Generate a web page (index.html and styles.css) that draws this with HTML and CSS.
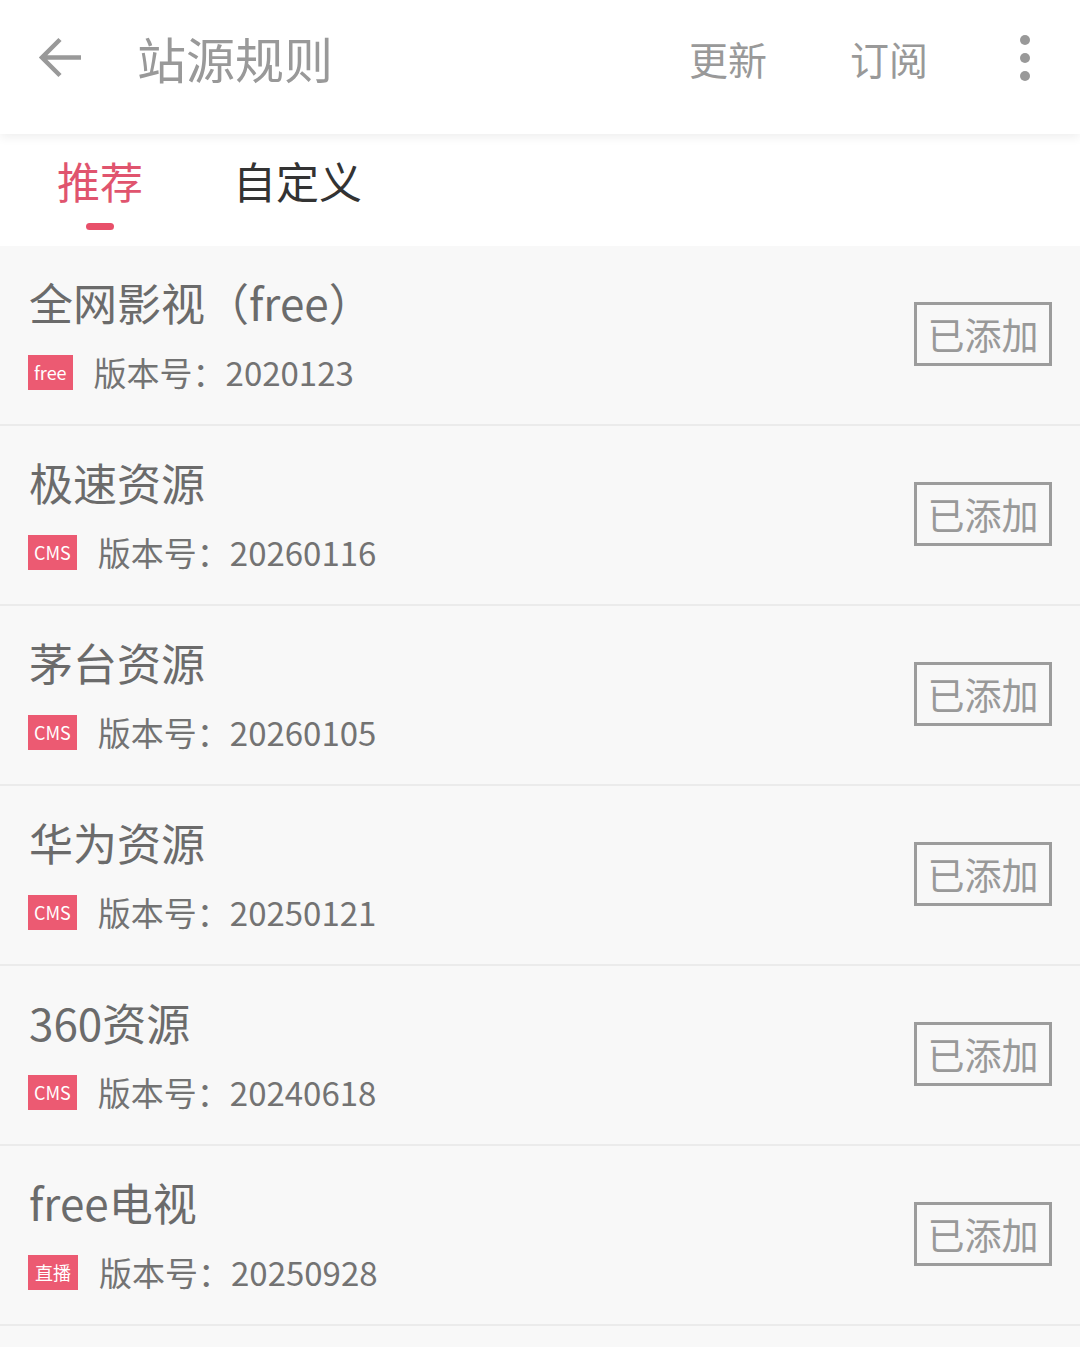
FILE: index.html
```html
<!DOCTYPE html>
<html lang="zh-CN">
<head>
<meta charset="utf-8">
<title>站源规则</title>
<link rel="stylesheet" href="styles.css">
</head>
<body>
<div class="topbar">
  <div class="back">
    <svg width="46" height="46" viewBox="0 0 46 46"><path d="M43 21.5H5M22 3.5L4 21.5L22 39.5" fill="none" stroke="#999" stroke-width="4.5"/></svg>
  </div>
  <div class="title">站源规则</div>
  <div class="action">更新</div>
  <div class="action">订阅</div>
  <div class="more"><i></i><i></i><i></i></div>
</div>

<div class="tabs">
  <div class="tab on">推荐</div>
  <div class="tab">自定义</div>
</div>

<ul class="list">
  <li>
    <div class="info">
      <div class="name">全网影视（free）</div>
      <div class="meta"><span class="tag">free</span>版本号：2020123</div>
    </div>
    <div class="btn">已添加</div>
  </li>
  <li>
    <div class="info">
      <div class="name">极速资源</div>
      <div class="meta"><span class="tag">CMS</span>版本号：20260116</div>
    </div>
    <div class="btn">已添加</div>
  </li>
  <li>
    <div class="info">
      <div class="name">茅台资源</div>
      <div class="meta"><span class="tag">CMS</span>版本号：20260105</div>
    </div>
    <div class="btn">已添加</div>
  </li>
  <li>
    <div class="info">
      <div class="name">华为资源</div>
      <div class="meta"><span class="tag">CMS</span>版本号：20250121</div>
    </div>
    <div class="btn">已添加</div>
  </li>
  <li>
    <div class="info">
      <div class="name">360资源</div>
      <div class="meta"><span class="tag">CMS</span>版本号：20240618</div>
    </div>
    <div class="btn">已添加</div>
  </li>
  <li>
    <div class="info">
      <div class="name">free电视</div>
      <div class="meta"><span class="tag tag-live">直播</span>版本号：20250928</div>
    </div>
    <div class="btn">已添加</div>
  </li>
</ul>
</body>
</html>
```

FILE: styles.css
```css
*{ padding:0; margin:0; list-style:none; box-sizing:border-box;}
body{ background:#f8f8f8; font-family:"Noto Sans CJK SC","Noto Sans",sans-serif; width:1080px; height:1347px; overflow:hidden;}

.topbar{
  height:134px;
  background:#fff;
  display:flex;
  align-items:center;
  padding:0 0 18px 38px;
  position:relative;
  z-index:2;
  box-shadow:0 3px 10px rgba(0,0,0,0.07);
}
.back{ width:46px; height:46px; margin-top:2px;}
.back svg{ display:block;}
.title{ font-size:49px; color:#999; margin-left:53px; flex:1; line-height:60px;}
.action{ font-size:39px; color:#999; margin-right:83px; line-height:60px;}
.action + .action{ margin-right:80px;}
.more{ display:flex; flex-direction:column; gap:8px; margin-right:50px; margin-left:12px;}
.more i{ display:block; width:10px; height:10px; border-radius:50%; background:#999;}

.tabs{
  height:112px;
  background:#fff;
  display:flex;
  padding-left:57px;
}
.tab{ font-size:43px; color:#333; line-height:50px; margin-top:21px; margin-right:90px; position:relative;}
.tab.on{ color:#e0546e;}
.tab.on:after{
  content:"";
  position:absolute;
  left:50%;
  margin-left:-14px;
  top:68px;
  width:28px;
  height:7px;
  border-radius:4px;
  background:#e8506a;
}

.list li{
  height:180px;
  border-bottom:2px solid #ebebeb;
  display:flex;
  align-items:center;
  justify-content:space-between;
  padding:0 28px 0 28px;
}
.info{ display:flex; flex-direction:column; margin-top:-6px;}
.name{ font-size:44px; color:#6b6b6b; line-height:60px; padding-left:1px;}
.meta{ font-size:33px; color:#737373; line-height:40px; margin-top:20px; display:flex; align-items:center;}
.tag{
  display:inline-block;
  height:35px;
  line-height:35px;
  padding:0 6px;
  background:#ec5a72;
  color:#fff;
  font-size:18px;
  margin-right:21px;
}
.tag-live{ padding:0 7px;}
.btn{
  width:138px;
  height:64px;
  border:3px solid #9c9c9c;
  color:#999;
  font-size:37px;
  line-height:58px;
  text-align:center;
  margin-top:-2px;
}
```
